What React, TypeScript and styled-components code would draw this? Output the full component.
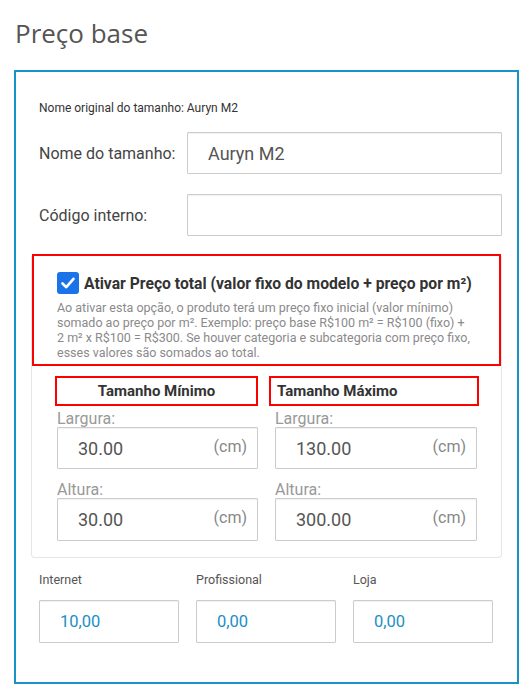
import { createGlobalStyle } from "styled-components";
import styled from "styled-components";

const GlobalStyle = createGlobalStyle`
  body {
    margin: 0;
    background: #fff;
    font-family: Roboto, "Liberation Sans", Arial, sans-serif;
    color: #333;
  }
  * { box-sizing: border-box; }
`;

const Page = styled.div`
  width: 529px;
  padding: 15px 10px 0 14px;
`;

const Title = styled.h2`
  margin: 0 0 19px 1px;
  font-family: "Open Sans", "Noto Sans", sans-serif;
  font-weight: 400;
  font-size: 26px;
  line-height: 36px;
  color: #555;
`;

const Panel = styled.div`
  width: 505px;
  border: 2px solid #1794c6;
  padding: 28px 15px 39px 15px;
`;

const OriginalName = styled.div`
  padding-left: 8px;
  font-size: 12px;
  line-height: 16px;
  color: #333;
`;

const Row = styled.div<{ $top: number }>`
  display: grid;
  grid-template-columns: 148px 1fr;
  align-items: center;
  padding-left: 8px;
  margin-top: ${(p) => p.$top}px;
`;

const RowLabel = styled.label`
  font-size: 16px;
  color: #444;
`;

const TextBox = styled.div<{ $h?: number }>`
  display: flex;
  align-items: center;
  justify-content: space-between;
  height: ${(p) => p.$h ?? 42}px;
  padding: 0 10px 0 20px;
  border: 1px solid #ccc;
  border-radius: 1px;
  box-shadow: inset 0 1px 1px rgba(0, 0, 0, 0.06);
  background: #fff;
`;

const Value = styled.span<{ $blue?: boolean }>`
  font-size: ${(p) => (p.$blue ? 16.5 : 18)}px;
  color: ${(p) => (p.$blue ? "#1a8fc6" : "#555")};
`;

const Unit = styled.span`
  font-size: 16px;
  color: #888;
  margin-top: -4px;
`;

const Card = styled.div`
  margin-top: 18px;
  border: 1px solid #e6e6e6;
  border-top: none;
  border-radius: 4px;
  padding-bottom: 16px;
`;

const CheckSection = styled.div`
  border: 2px solid #f00;
  padding: 16px 24px 4px 23px;
`;

const CheckRow = styled.div`
  display: flex;
  align-items: center;
  gap: 5px;
`;

const CheckBox = styled.span`
  display: inline-flex;
  align-items: center;
  justify-content: center;
  flex: none;
  width: 22px;
  height: 22px;
  border-radius: 3px;
  background: #1a73e8;
`;

const CheckLabel = styled.span`
  font-size: 15.7px;
  font-weight: 700;
  color: #333;
  white-space: nowrap;
`;

const Help = styled.p`
  margin: 6px 0 0;
  font-size: 12.5px;
  line-height: 15px;
  color: #8a8a8a;
`;

const SizeGrid = styled.div`
  display: grid;
  grid-template-columns: 201px 202px;
  column-gap: 17px;
  padding: 10px 24px 0 25px;
`;

const SizeCol = styled.div`
  display: flex;
  flex-direction: column;
`;

const SizeHeading = styled.div<{ $align: "center" | "left" }>`
  height: 30px;
  border: 2px solid #f00;
  display: flex;
  align-items: center;
  justify-content: ${(p) => (p.$align === "center" ? "center" : "flex-start")};
  margin-left: ${(p) => (p.$align === "center" ? -2 : -6)}px;
  margin-right: ${(p) => (p.$align === "center" ? 0 : -2)}px;
  padding-left: ${(p) => (p.$align === "center" ? 0 : 6)}px;
  font-size: 15px;
  font-weight: 700;
  color: #333;
`;

const FieldLabel = styled.div<{ $top: number }>`
  margin-top: ${(p) => p.$top}px;
  font-size: 16px;
  line-height: 17px;
  color: #999;
`;

const PriceGrid = styled.div`
  display: grid;
  grid-template-columns: repeat(3, 140px);
  column-gap: 17px;
  padding-left: 8px;
  margin-top: 14px;
`;

const PriceLabel = styled.div`
  font-size: 12.5px;
  line-height: 16px;
  color: #555;
  margin-bottom: 12px;
`;

const sizes = [
  { title: "Tamanho Mínimo", align: "center" as const, w: "30.00", h: "30.00" },
  { title: "Tamanho Máximo", align: "left" as const, w: "130.00", h: "300.00" },
];

const prices = [
  { label: "Internet", value: "10,00" },
  { label: "Profissional", value: "0,00" },
  { label: "Loja", value: "0,00" },
];

export default function App() {
  return (
    <Page>
      <GlobalStyle />
      <Title>Preço base</Title>
      <Panel>
        <OriginalName>Nome original do tamanho: Auryn M2</OriginalName>
        <Row $top={16}>
          <RowLabel>Nome do tamanho:</RowLabel>
          <TextBox>
            <Value>Auryn M2</Value>
          </TextBox>
        </Row>
        <Row $top={20}>
          <RowLabel>Código interno:</RowLabel>
          <TextBox />
        </Row>
        <Card>
          <CheckSection>
            <CheckRow>
              <CheckBox>
                <svg width="16" height="16" viewBox="0 0 16 16">
                  <path
                    d="M2.5 8.5 L6.3 12.2 L13.5 3.8"
                    fill="none"
                    stroke="#fff"
                    strokeWidth="2.6"
                    strokeLinecap="round"
                    strokeLinejoin="round"
                  />
                </svg>
              </CheckBox>
              <CheckLabel>
                Ativar Preço total (valor fixo do modelo + preço por m²)
              </CheckLabel>
            </CheckRow>
            <Help>
              Ao ativar esta opção, o produto terá um preço fixo inicial (valor
              mínimo) somado ao preço por m². Exemplo: preço base R$100 m² =
              R$100 (fixo) + 2{"\u00a0"}m² x R$100 = R$300. Se houver categoria e
              subcategoria com preço fixo, esses valores são somados ao total.
            </Help>
          </CheckSection>
          <SizeGrid>
            {sizes.map((s) => (
              <SizeCol key={s.title}>
                <SizeHeading $align={s.align}>{s.title}</SizeHeading>
                <FieldLabel $top={4}>Largura:</FieldLabel>
                <TextBox>
                  <Value>{s.w}</Value>
                  <Unit>(cm)</Unit>
                </TextBox>
                <FieldLabel $top={12}>Altura:</FieldLabel>
                <TextBox $h={43}>
                  <Value>{s.h}</Value>
                  <Unit>(cm)</Unit>
                </TextBox>
              </SizeCol>
            ))}
          </SizeGrid>
        </Card>
        <PriceGrid>
          {prices.map((p) => (
            <div key={p.label}>
              <PriceLabel>{p.label}</PriceLabel>
              <TextBox $h={43}>
                <Value $blue>{p.value}</Value>
              </TextBox>
            </div>
          ))}
        </PriceGrid>
      </Panel>
    </Page>
  );
}
